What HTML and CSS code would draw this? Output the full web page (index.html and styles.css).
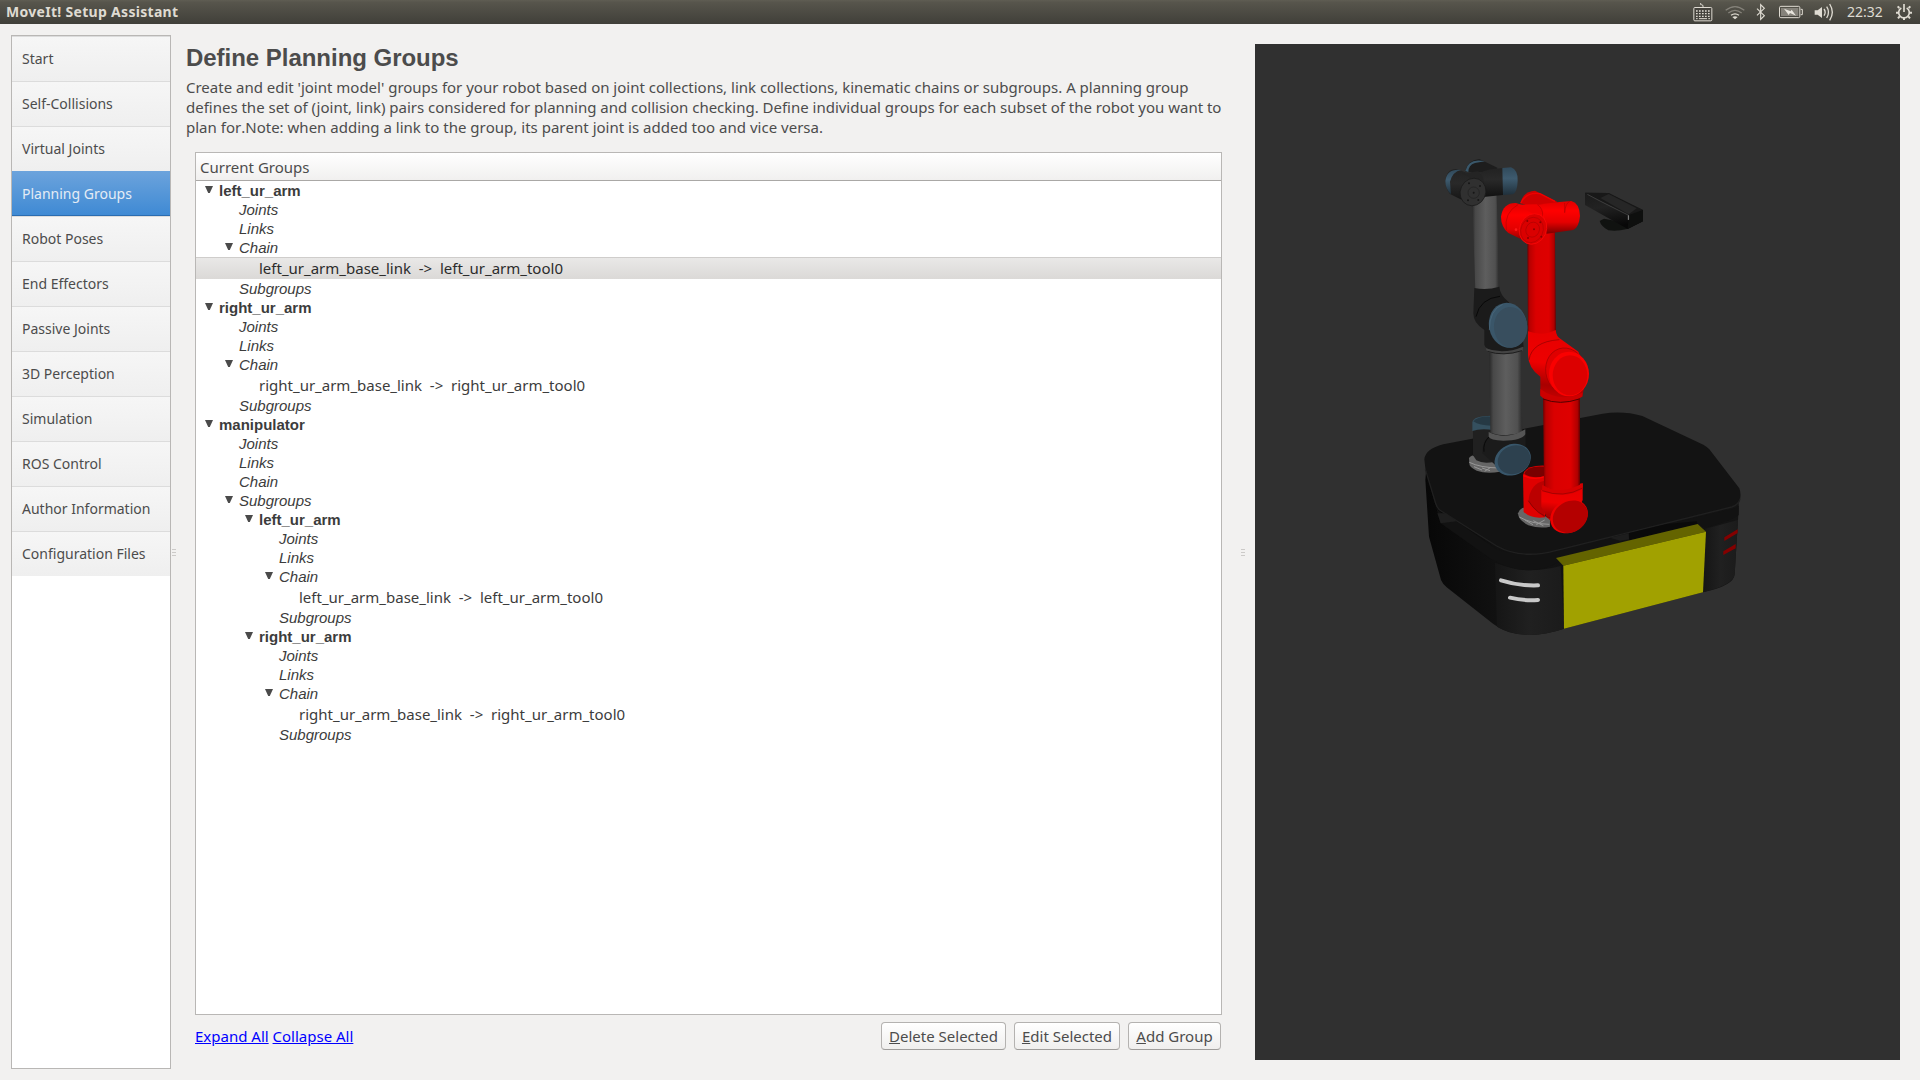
FILE: index.html
```html
<!DOCTYPE html>
<html lang="en">
<head>
<meta charset="utf-8">
<title>MoveIt! Setup Assistant</title>
<link rel="stylesheet" href="styles.css">
</head>
<body>
<header class="topbar">
  <span class="app-title">MoveIt! Setup Assistant</span>
  <div class="tray">
    <svg class="tray-keyboard" width="20" height="24" viewBox="99 0 60 72"><path d="M129 23v-5q0-4-5-4h-2V9" fill="none" stroke="#dfdbd2" stroke-width="3"/><rect x="101.500" y="22.500" width="54" height="40" rx="3" fill="#45433d" stroke="#dfdbd2" stroke-width="3"/><path d="M108 33h42M108 41h42" stroke="#dfdbd2" stroke-width="4" stroke-dasharray="5 4"/><path d="M108 49h42" stroke="#dfdbd2" stroke-width="4" stroke-dasharray="5 4"/><path d="M108 56h5m4 0h24m4 0h5" stroke="#dfdbd2" stroke-width="3"/></svg>
    <svg class="tray-wifi" width="20" height="24" viewBox="195 0 60 72"><g fill="none" stroke-width="4"><path d="M197 31q28-22 56 0" stroke="#85827a"/><path d="M205 39q20-16 40 0" stroke="#85827a"/><path d="M213 46q12-9 24 0" stroke="#dfdbd2"/></g><path d="M217 51q8-5 16 0l-8 7z" fill="#dfdbd2"/></svg>
    <svg class="tray-bluetooth" width="10" height="24" viewBox="288 0 30 72"><path d="M291 26l22 21-11 11V14l11 11-22 21" fill="none" stroke="#dfdbd2" stroke-width="3.5"/></svg>
    <svg class="tray-battery" width="24" height="24" viewBox="357 0 72 72"><rect x="358.500" y="19" width="61" height="34" rx="4" fill="none" stroke="#dfdbd2" stroke-width="3"/><rect x="363" y="24" width="52" height="24" fill="#85827a"/><path d="M422 28h5v16h-5" fill="none" stroke="#dfdbd2" stroke-width="3"/><path d="M372 26l20 8 3-5 13 18-18-8-4 6z" fill="#e8e5dd"/></svg>
    <svg class="tray-volume" width="21" height="24" viewBox="463 0 63 72"><path d="M465 31h9l13-10v33l-13-10h-9z" fill="#dfdbd2"/><g fill="none" stroke="#dfdbd2" stroke-width="4"><path d="M493 27q7 10 0 20"/><path d="M501 20q11 17 0 34"/><path d="M510 12q16 25 0 49"/></g></svg>
    <span class="clock">22:32</span>
    <svg class="tray-gear" width="16" height="24" viewBox="708 0 48 72"><g fill="none" stroke="#dfdbd2"><path d="M724 24a16 16 0 1 0 16 0" stroke-width="5"/><path d="M732 12v24" stroke-width="5"/><path d="M718 24l-5-5M746 24l5-5M714 38h-6M750 38h6M719 49l-5 6M745 49l5 6M732 54v6" stroke-width="6"/></g></svg>
  </div>
</header>
<div class="workspace">
  <nav class="sidebar">
    <a class="nav-item">Start</a>
    <a class="nav-item">Self-Collisions</a>
    <a class="nav-item">Virtual Joints</a>
    <a class="nav-item active">Planning Groups</a>
    <a class="nav-item">Robot Poses</a>
    <a class="nav-item">End Effectors</a>
    <a class="nav-item">Passive Joints</a>
    <a class="nav-item">3D Perception</a>
    <a class="nav-item">Simulation</a>
    <a class="nav-item">ROS Control</a>
    <a class="nav-item">Author Information</a>
    <a class="nav-item">Configuration Files</a>
  </nav>
  <div class="splitter"><i></i><i></i><i></i></div>
  <main class="content">
    <h1>Define Planning Groups</h1>
    <p class="intro">Create and edit 'joint model' groups for your robot based on joint collections, link collections, kinematic chains or subgroups. A planning group<br>defines the set of (joint, link) pairs considered for planning and collision checking. Define individual groups for each subset of the robot you want to<br><span class="loose">plan for.Note: when adding a link to the group, its parent joint is added too and vice versa.</span></p>
    <section class="tree">
      <div class="tree-head">Current Groups</div>
      <div class="row group l0 open">left_ur_arm</div>
      <div class="row kind l1">Joints</div>
      <div class="row kind l1">Links</div>
      <div class="row kind l1 open">Chain</div>
      <div class="row chain l2 selected">left_ur_arm_base_link&nbsp; -&gt;&nbsp; left_ur_arm_tool0</div>
      <div class="row kind l1">Subgroups</div>
      <div class="row group l0 open">right_ur_arm</div>
      <div class="row kind l1">Joints</div>
      <div class="row kind l1">Links</div>
      <div class="row kind l1 open">Chain</div>
      <div class="row chain l2">right_ur_arm_base_link&nbsp; -&gt;&nbsp; right_ur_arm_tool0</div>
      <div class="row kind l1">Subgroups</div>
      <div class="row group l0 open">manipulator</div>
      <div class="row kind l1">Joints</div>
      <div class="row kind l1">Links</div>
      <div class="row kind l1">Chain</div>
      <div class="row kind l1 open">Subgroups</div>
      <div class="row group l2 open">left_ur_arm</div>
      <div class="row kind l3">Joints</div>
      <div class="row kind l3">Links</div>
      <div class="row kind l3 open">Chain</div>
      <div class="row chain l4">left_ur_arm_base_link&nbsp; -&gt;&nbsp; left_ur_arm_tool0</div>
      <div class="row kind l3">Subgroups</div>
      <div class="row group l2 open">right_ur_arm</div>
      <div class="row kind l3">Joints</div>
      <div class="row kind l3">Links</div>
      <div class="row kind l3 open">Chain</div>
      <div class="row chain l4">right_ur_arm_base_link&nbsp; -&gt;&nbsp; right_ur_arm_tool0</div>
      <div class="row kind l3">Subgroups</div>
    </section>
    <footer class="actions">
      <div class="links"><a>Expand All</a> <a>Collapse All</a></div>
      <button class="btn-delete"><u>D</u>elete Selected</button>
      <button class="btn-edit"><u>E</u>dit Selected</button>
      <button class="btn-add"><u>A</u>dd Group</button>
    </footer>
  </main>
  <div class="splitter right"><i></i><i></i><i></i></div>
  <svg class="viewport" width="645" height="1016" viewBox="1255 44 645 1016">
    <defs>
      <linearGradient id="tube"><stop offset="0" stop-color="#292929"/><stop offset=".12" stop-color="#484848"/><stop offset=".5" stop-color="#5e5e5e"/><stop offset=".85" stop-color="#505050"/><stop offset="1" stop-color="#292929"/></linearGradient>
      <linearGradient id="redtube"><stop offset="0" stop-color="#700000"/><stop offset=".08" stop-color="#b80000"/><stop offset=".3" stop-color="#da0000"/><stop offset=".75" stop-color="#de0000"/><stop offset=".93" stop-color="#b00000"/><stop offset="1" stop-color="#600000"/></linearGradient>
      <linearGradient id="redbarrel" x1="0" y1="0" x2="0" y2="1"><stop offset="0" stop-color="#e00000"/><stop offset=".3" stop-color="#ff0000"/><stop offset=".65" stop-color="#e40000"/><stop offset="1" stop-color="#7a0000"/></linearGradient>
      <linearGradient id="redelbow" x1=".3" y1="0" x2=".2" y2="1"><stop offset="0" stop-color="#e60000"/><stop offset=".45" stop-color="#ee0000"/><stop offset=".75" stop-color="#a80000"/><stop offset="1" stop-color="#d40000"/></linearGradient>
      <linearGradient id="blackbarrel" x1="0" y1="0" x2="0" y2="1"><stop offset="0" stop-color="#222"/><stop offset=".4" stop-color="#292929"/><stop offset="1" stop-color="#111"/></linearGradient>
      <linearGradient id="bluecap" x1="0" y1="0" x2="0" y2="1"><stop offset="0" stop-color="#30495a"/><stop offset=".4" stop-color="#3e5b6f"/><stop offset="1" stop-color="#20303b"/></linearGradient>
      <linearGradient id="corner"><stop offset="0" stop-color="#151515"/><stop offset=".5" stop-color="#202020"/><stop offset="1" stop-color="#1b1b1b"/></linearGradient>
      <linearGradient id="side"><stop offset="0" stop-color="#070707"/><stop offset=".25" stop-color="#121212"/><stop offset="1" stop-color="#141414"/></linearGradient>
      <linearGradient id="kinect" x1="0" y1="0" x2=".3" y2="1"><stop offset="0" stop-color="#1a1a1a"/><stop offset=".45" stop-color="#222"/><stop offset="1" stop-color="#080808"/></linearGradient>
    </defs>
    <rect x="1255" y="44" width="645" height="1016" fill="#303030"/>
    <!-- mobile base -->
    <g transform="translate(1400 380) scale(.33333)">
      <path d="M78 275L76 300 87 470 123 600Q128 612 140 622L280 732Q320 764 390 765 440 764 492 746L909 637Q1003 617 1004 583L1016 390V370L900 330 400 490Z" fill="url(#side)"/>
      <path d="M285 548Q340 570 390 571 440 570 482 558L492 746Q440 764 390 765 330 764 291 740Z" fill="url(#corner)"/>
      <path d="M915 447L1014 420 1004 583Q1000 615 909 637Z" fill="url(#corner)"/>
      <path d="M80 280L112 396Q116 403 124 405L150 406 168 425 122 430Q105 350 80 305Z" fill="#090909"/>
      <path d="M78 275L110 385Q120 402 145 405L170 424 285 505Q340 532 440 516L1000 386Q1018 380 1016 372V405Q1000 420 917 443L893 432 482 542Q430 574 370 570 320 566 270 535L122 430Z" fill="#121212"/>
      <path d="M73 238Q76 207 130 193L608 101Q670 92 727 108L910 194Q922 201 928 208L1018 325Q1024 340 1020 358 1016 375 995 381L470 511Q365 540 290 498L120 391Q108 382 105 370L76 265Z" fill="#131313"/>
      <path d="M76 268L107 370Q110 382 120 391L290 498Q365 540 470 511L995 381Q1017 374 1020 356" fill="none" stroke="#202020" stroke-width="4"/>
      <path d="M112 400L138 400 170 424 122 430Z" fill="#1e1e1e"/>
      <path d="M686 460L800 432 890 424 893 433 688 481Z" fill="#0a0a0a"/><path d="M630 473L686 460 687 478 660 482Z" fill="#1d1d1d"/>
      <path d="M468 534L893 432 918 455 490 557Z" fill="#646400"/>
      <path d="M490 557L918 455 909 637 492 746Z" fill="#a1a100"/>
      <g fill="none" stroke-linecap="round"><path d="M303 601Q355 618 414 616" stroke="#c8c8c8" stroke-width="12"/><path d="M330 653Q370 663 414 660" stroke="#c8c8c8" stroke-width="12"/></g>
      <path d="M973 472L1013 448V459L973 483ZM970 514L1007 492V505L970 525Z" fill="#840000"/>
      <!-- left arm foot -->
      <path d="M207 234Q215 222 240 226L300 250V275Q260 283 230 272 207 262 208 250Z" fill="#666"/>
      <path d="M208 247Q240 263 297 264M222 260l24 10M246 264l24 8M272 262l-18 12" fill="none" stroke="#999" stroke-width="3"/>
      <path d="M219 140H285V245Q250 253 229 241L219 226Z" fill="#202020"/>
      <path d="M217 127Q220 106 280 107V150Q240 145 217 153Z" fill="#35505f"/><path d="M220 124Q235 106 280 110V137Q240 138 220 124" fill="#263944"/>
      <path d="M247 220Q245 180 275 163L377 160V205L340 270 295 263Z" fill="#1b1b1b"/>
      <path d="M252 215Q248 188 268 170" fill="none" stroke="#090909" stroke-width="3"/>
      <path d="M268 -90H363L367 155Q320 175 271 158Z" fill="url(#tube)"/>
      <path d="M266 156Q320 182 376 148V163Q365 182 310 182 270 180 266 170Z" fill="#555"/>
      <ellipse cx="338" cy="239" rx="56" ry="46" transform="rotate(-24 338 239)" fill="#38566a"/><ellipse cx="342" cy="239" rx="50" ry="42" transform="rotate(-24 342 239)" fill="#2d414f"/>
    </g>
    <!-- left arm -->
    <g transform="translate(1400 140) scale(.33333)">
      <path d="M216 165H290L298 448H226Z" fill="url(#tube)"/>
      <path d="M223 444Q260 452 298 440 300 465 325 485L360 530 371 620Q340 640 290 635 255 628 253 614V570Q220 550 220 520Z" fill="#1b1b1b"/>
      <path d="M228 530Q240 475 300 469" fill="none" stroke="#080808" stroke-width="3"/>
      <path d="M257 625Q310 645 369 620L368 632Q320 650 262 636Z" fill="#444"/><path d="M262 634Q310 650 366 632" fill="none" stroke="#1d1d1d" stroke-width="3"/>
      <ellipse cx="324" cy="556" rx="57" ry="68" transform="rotate(-12 324 556)" fill="#3a5669"/><ellipse cx="332" cy="562" rx="50" ry="61" transform="rotate(-5 332 562)" fill="#384e5e"/>
      <path d="M268 570Q268 510 308 493" fill="none" stroke="#4d6d82" stroke-width="2"/>
      <path d="M196 95Q202 60 238 57L292 83 290 100Z" fill="#1d1d1d"/><path d="M196 93Q205 52 255 64L225 69Q205 75 205 96Z" fill="#3a586b"/>
      <path d="M237 105Q245 88 309 84V165L250 171Z" fill="url(#blackbarrel)"/>
      <path d="M307 84L333 82Q354 90 353 122 352 155 339 163L309 165Z" fill="url(#bluecap)"/>
      <path d="M136 123Q140 85 170 87L245 115V180L210 192 150 162Q136 145 136 123Z" fill="url(#blackbarrel)"/>
      <path d="M136 123Q141 85 184 90 157 95 150 125L153 163Q136 147 136 123Z" fill="url(#bluecap)"/>
      <path d="M188 100L235 94Q250 105 253 130L210 113Z" fill="#242424"/>
      <ellipse cx="219" cy="156" rx="38" ry="42" transform="rotate(25 219 156)" fill="#303030" stroke="#181818" stroke-width="2"/><circle cx="221" cy="158" r="17" fill="none" stroke="#202020" stroke-width="2"/><g fill="#161616"><circle cx="207" cy="130" r="3"/><circle cx="240" cy="138" r="3"/><circle cx="204" cy="181" r="3"/><circle cx="235" cy="180" r="3"/><circle cx="221" cy="158" r="3"/></g>
    </g>
    <!-- right arm, lower half -->
    <g transform="translate(1400 380) scale(.33333)">
      <path d="M354 400Q360 380 385 382L450 415V440Q420 447 385 436 354 420 354 400Z" fill="#666"/>
      <path d="M358 411Q395 432 448 433M375 420l24 14M400 422l30 15M434 420l-25 14" stroke="#999" stroke-width="3" fill="none"/>
      <path d="M369 285Q375 255 435 257V412Q395 418 371 396Z" fill="#df0000"/><path d="M373 282Q380 255 435 260V288Q400 298 373 282Z" fill="#790000"/><path d="M371 287Q400 302 435 290" fill="none" stroke="red" stroke-width="4"/>
      <path d="M385 365Q390 310 433 302V412Q405 395 385 365Z" fill="#bb0000"/>
      <path d="M424 330L548 310V360L520 420 470 437 440 412 424 380Z" fill="url(#redelbow)"/>
      <path d="M429 50H540L540 318Q490 342 432 320Z" fill="url(#redtube)"/>
      <path d="M427 315Q485 347 548 310V326Q500 358 426 334Z" fill="#d60000"/><path d="M427 332Q490 356 548 324" fill="none" stroke="#750000" stroke-width="1.5"/>
      <path d="M385 362Q412 405 452 414" fill="none" stroke="#790000" stroke-width="2"/>
      <ellipse cx="507" cy="409" rx="59" ry="48" transform="rotate(-30 507 409)" fill="#ed0000"/><ellipse cx="511" cy="410" rx="55" ry="46" transform="rotate(-32 511 410)" fill="#b40000"/>
    </g>
    <!-- right arm, upper half -->
    <g transform="translate(1400 140) scale(.33333)">
      <path d="M382 275H465L468 595H384Z" fill="url(#redtube)"/>
      <path d="M384 574Q430 590 467 570 469 590 482 597L535 635 560 700 547 770Q500 797 448 783 422 775 421 762V710Q385 685 384 645Z" fill="url(#redelbow)"/>
      <path d="M387 660Q395 605 478 599" fill="none" stroke="#8b0000" stroke-width="2"/>
      <path d="M421 747Q480 790 547 758V769Q500 800 421 768Z" fill="#cc0000"/><path d="M429 777Q480 797 538 777" fill="none" stroke="#500000" stroke-width="3"/>
      <ellipse cx="499" cy="695" rx="61" ry="72" transform="rotate(-18 499 695)" fill="#df0000" stroke="#a00000" stroke-width="2"/>
      <ellipse cx="507" cy="702" rx="60" ry="67" fill="#fa0000"/><ellipse cx="510" cy="706" rx="52" ry="60" fill="#dc0000"/>
      <path d="M362 190Q368 155 405 152L471 185 455 220Z" fill="#ce0000"/><path d="M362 190Q378 155 420 161L465 184" fill="none" stroke="#f00000" stroke-width="4"/>
      <path d="M390 200Q440 188 514 183 539 190 540 228 537 262 520 270L440 281Z" fill="url(#redbarrel)"/>
      <path d="M303 230Q309 188 348 189L430 215 440 280 390 310 325 279Q303 260 303 230Z" fill="url(#redbarrel)"/>
      <path d="M350 194L412 193Q427 200 430 224L400 222Z" fill="#f00000"/><path d="M412 194Q430 205 428 230M494 189v29M510 183Q496 190 494 218M319 270Q311 218 355 193" fill="none" stroke="#a40000" stroke-width="1.5"/>
      <ellipse cx="399" cy="267" rx="40" ry="47" transform="rotate(25 399 267)" fill="#da0000" stroke="#ff0808" stroke-width="2"/><ellipse cx="396" cy="270" rx="33" ry="39" transform="rotate(25 396 270)" fill="none" stroke="#a80000" stroke-width="1.5"/><ellipse cx="398" cy="269" rx="20" ry="23" transform="rotate(25 398 269)" fill="none" stroke="#a20000" stroke-width="1.5"/><g fill="#800"><circle cx="382" cy="243" r="3"/><circle cx="421" cy="247" r="3"/><circle cx="384" cy="294" r="3"/><circle cx="424" cy="290" r="3"/><circle cx="402" cy="268" r="3"/></g><circle cx="348" cy="269" r="4" fill="#ff1818"/>
      <!-- depth camera -->
      <path d="M599 243L612 236 700 253 681 267Q652 275 625 271Q603 259 599 243Z" fill="#101210"/>
      <path d="M555 158L626 159 729 210V244L683 267 555 195Z" fill="url(#kinect)"/>
      <path d="M555 158L626 159 729 210 686 226Z" fill="#181818"/><path d="M601 174L626 162 710 205 686 223Z" fill="#262626"/><path d="M686 226L729 210V244L683 267Z" fill="#0e0f0e"/><path d="M562 163L600 183 686 226V238" fill="none" stroke="#4d4d4d" stroke-width="2"/><path d="M685 226v14" stroke="#bbb" stroke-width="2"/>
    </g>
  </svg>
</div>
</body>
</html>
```
FILE: styles.css
```css
* { box-sizing: border-box; }
body {
  margin: 0;
  width: 1920px;
  height: 1080px;
  overflow: hidden;
  display: flex;
  flex-direction: column;
  background: #f2f1f0;
  color: #4c4c4c;
  font-family: "Noto Sans", sans-serif;
  font-size: 15px;
}
.topbar {
  height: 24px;
  display: flex;
  align-items: center;
  justify-content: space-between;
  padding: 0 8px 0 6px;
  background: linear-gradient(#5f5d53 0, #57554c 10%, #403f39 100%);
  color: #dfdbd2;
}
.app-title { font-size: 14px; font-weight: 700; line-height: 24px; letter-spacing: 0.3px; }
.tray { display: flex; align-items: center; }
.tray svg { display: block; }
.tray-wifi { margin-left: 12px; }
.tray-bluetooth { margin-left: 11px; }
.tray-battery { margin-left: 13px; }
.tray-volume { margin-left: 11px; }
.clock { width: 37px; margin-left: 12px; font-size: 14px; line-height: 24px; white-space: nowrap; }
.tray-gear { margin-left: 12px; }

.workspace { flex: 1; display: flex; padding-left: 11px; min-height: 0; }
.sidebar {
  width: 160px;
  height: 1034px;
  margin-top: 11px;
  border: 1px solid #b9b7b5;
  background: #fff;
}
.nav-item {
  display: block;
  height: 45px;
  padding-left: 10px;
  font-size: 14px;
  line-height: 44px;
  white-space: nowrap;
  background: linear-gradient(#f6f6f6, #efefef);
  border-top: 1px solid #dcdcdc;
}
.nav-item.active {
  background: linear-gradient(#6ca3dc, #3f8ad4);
  border-top: 0;
  border-bottom: 1px solid #2a6cb0;
  line-height: 46px;
  color: #e4ecf5;
}
.splitter {
  width: 4px;
  margin: 525px 0 0 1px;
  display: flex;
  flex-direction: column;
  gap: 2px;
}
.splitter i { height: 1px; background: #cccac8; }
.splitter.right { margin-left: 19px; }

.content { width: 1036px; margin-left: 10px; display: flex; flex-direction: column; }
h1 {
  margin: 20px 0 0;
  font: 700 24px/28px "Liberation Sans", sans-serif;
  letter-spacing: -0.03px;
}
.intro { margin: 5px 0 0; height: 60px; line-height: 20px; white-space: nowrap; letter-spacing: -0.008px; }
.loose { font-kerning: none; letter-spacing: 0.01px; }
.tree {
  width: 1027px;
  height: 863px;
  margin: 15px 0 0 9px;
  border: 1px solid #b9b7b5;
  background: #fff;
  color: #3c3c3c;
}
.tree-head {
  height: 28px;
  padding-left: 4px;
  line-height: 29px;
  color: #4c4c4c;
  background: linear-gradient(#fff, #f1f0ef);
  border-bottom: 1px solid #aaa8a6;
}
.row {
  height: 19px;
  display: flex;
  align-items: center;
  font: 15px/19px "Liberation Sans", sans-serif;
  white-space: pre;
}
.row.group { font-weight: 700; }
.row.kind { font-style: italic; }
.row.chain { height: 22px; font-family: "Noto Sans", sans-serif; line-height: 22px; }
.row.selected {
  background: linear-gradient(#e9e8e7, #dbd9d7);
  border-top: 1px solid #cfcdcb;
  line-height: 20px;
  padding-bottom: 1px;
  color: #2c2c2c;
}
.l0 { padding-left: 23px; }
.l1 { padding-left: 43px; }
.l2 { padding-left: 63px; }
.l3 { padding-left: 83px; }
.l4 { padding-left: 103px; }
.open::before {
  content: "";
  width: 8px;
  height: 7px;
  margin: -2px 6px 0 -14px;
  background: #4a4a4a;
  clip-path: polygon(0 0, 100% 0, 60% 100%, 40% 100%);
}
.actions { display: flex; align-items: flex-start; padding: 7px 1px 0 9px; }
.links { flex: 1; line-height: 28px; color: #00f; }
.links a { text-decoration: underline; }
button {
  height: 28px;
  padding: 0;
  border: 1px solid #b4b2b0;
  border-bottom-color: #9f9d9b;
  border-radius: 4px;
  background: linear-gradient(#fff, #f0efee);
  color: #4c4c4c;
  font: 15px/26px "Noto Sans", sans-serif;
  white-space: nowrap;
}
.btn-delete { width: 125px; }
.btn-edit { width: 106px; margin-left: 8px; }
.btn-add { width: 93px; margin-left: 8px; }
.viewport { display: block; margin: 20px 0 0 10px; flex: none; }
```
